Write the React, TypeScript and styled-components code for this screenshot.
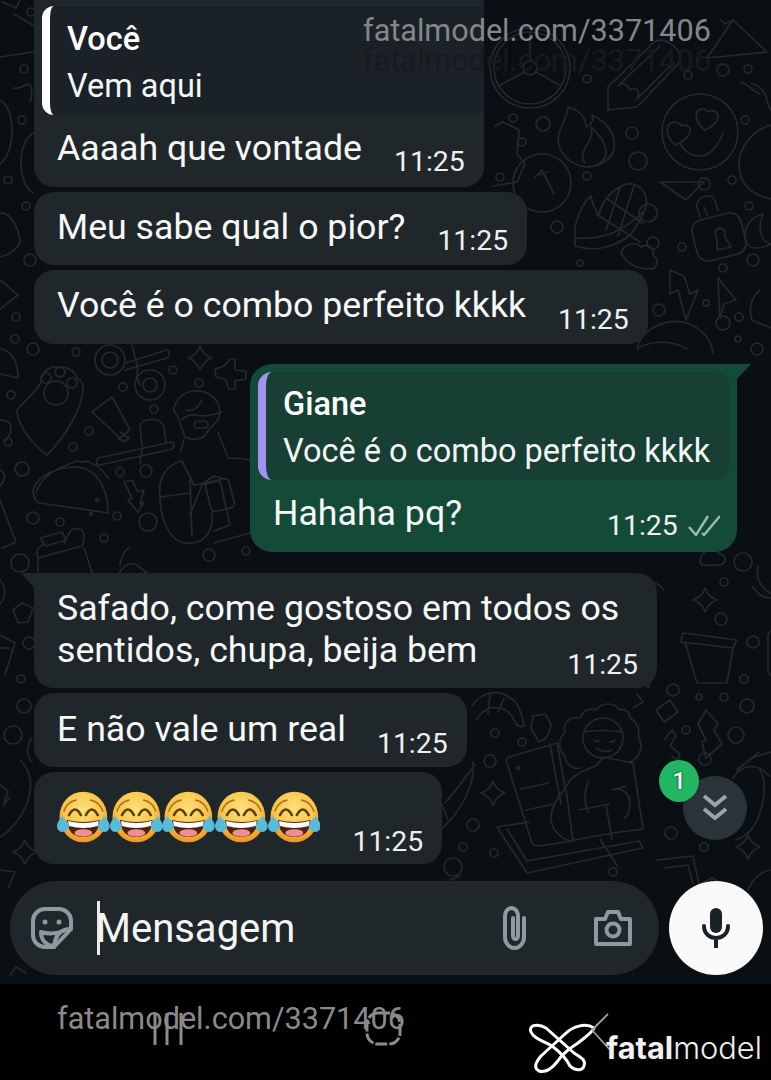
import React from "react";
import styled, { createGlobalStyle } from "styled-components";

const GlobalStyle = createGlobalStyle`
    html, body {
        margin: 0;
        padding: 0;
        background: #000;
    }
    * {
        box-sizing: border-box;
    }
`;

const Screen = styled.div`
    position: relative;
    width: 771px;
    height: 1080px;
    overflow: hidden;
    font-family: Roboto, "Liberation Sans", sans-serif;
    color: #fff;
    background: #000;
`;

const ChatArea = styled.main`
    position: relative;
    height: 984px;
    background: #0a0f13;
    display: flex;
    flex-direction: column;
`;

const Wallpaper = styled.svg`
    position: absolute;
    inset: 0;
    fill: none;
    stroke: #23292d;
    stroke-width: 1.7;
    stroke-linecap: round;
    stroke-linejoin: round;
`;

const Messages = styled.div`
    position: relative;
    flex: 1;
    display: flex;
    flex-direction: column;
    align-items: flex-start;
    padding: 0 34px;
`;

const Bubble = styled.div<{ $gap?: number; $tail?: boolean; $openTop?: boolean }>`
    position: relative;
    margin-top: ${props => props.$gap ?? 5}px;
    padding: ${props => (props.$openTop ? "6px" : "0")} 19px 0 23px;
    background: #1f272b;
    border-radius: ${props => (props.$openTop ? "0 0 20px 20px" : "20px")};
    ${props => props.$tail && "border-top-left-radius: 0;"}

    ${props => props.$tail && `
        &::before {
            content: "";
            position: absolute;
            top: 0;
            left: -13px;
            width: 14px;
            height: 16px;
            background: #1f272b;
            clip-path: polygon(0 0, 100% 0, 100% 100%);
        }
    `}
`;

const SentBubble = styled.div`
    position: relative;
    align-self: flex-end;
    width: 487px;
    height: 188px;
    margin-top: 20px;
    padding: 8px 8px 0;
    background: #144b38;
    border-radius: 22px 0 22px 22px;

    &::after {
        content: "";
        position: absolute;
        top: 0;
        right: -14px;
        width: 15px;
        height: 16px;
        background: #144b38;
        clip-path: polygon(0 0, 100% 0, 0 100%);
    }
`;

const Quote = styled.div<{ $bar: string; $bg: string }>`
    overflow: hidden;
    background: ${props => props.$bg};
    border-radius: 14px;
    border-left: 8px solid ${props => props.$bar};
`;

const ReceivedQuote = styled(Quote)`
    width: 442px;
    height: 109px;
    margin: 0 -19px 0 -15px;
    padding: 14px 0 0 17px;
    border-radius: 12px 0 14px 12px;
`;

const SentQuote = styled(Quote)`
    height: 108px;
    padding: 13px 0 0 17px;
`;

const QuoteAuthor = styled.div`
    font-size: 32.5px;
    line-height: 38px;
    font-weight: 500;
    color: #fff;
    margin-bottom: 9px;
`;

const QuoteText = styled.div`
    font-size: 32.5px;
    line-height: 38px;
    white-space: nowrap;
    color: #f4f5f5;
`;

const Row = styled.div<{ $height: number }>`
    display: flex;
    align-items: flex-start;
    height: ${props => props.$height}px;
`;

const MessageText = styled.div<{ $top?: number; $width?: number }>`
    flex: none;
    width: ${props => (props.$width ? `${props.$width}px` : "auto")};
    padding-top: ${props => props.$top ?? 14}px;
    font-size: 35.7px;
    line-height: 42px;
    white-space: nowrap;
    color: #f7f8f8;
`;

const Time = styled.span<{ $offset: number; $top: number }>`
    flex: none;
    margin-left: ${props => props.$offset}px;
    margin-top: ${props => props.$top}px;
    font-size: 28.4px;
    line-height: 34px;
    color: #eef0f0;
`;

const SentFooter = styled.div`
    display: flex;
    align-items: flex-start;
    padding-left: 15px;
`;

const Ticks = styled.svg`
    flex: none;
    margin: 35px 0 0 10px;
    fill: none;
    stroke: #9dbcb0;
    stroke-width: 2.4;
`;

const EmojiRow = styled.div`
    flex: none;
    display: flex;
    padding-top: 19px;
`;

const ScrollButton = styled.div`
    position: absolute;
    left: 683px;
    top: 776px;
    width: 64px;
    height: 64px;
    border-radius: 50%;
    background: #2a3338;
    display: flex;
    align-items: center;
    justify-content: center;
`;

const UnreadBadge = styled.span`
    position: absolute;
    left: -24px;
    top: -16px;
    width: 40px;
    height: 42px;
    border-radius: 50%;
    background: #22b562;
    color: #fff;
    font-size: 24px;
    font-weight: 500;
    display: flex;
    align-items: center;
    justify-content: center;
    text-shadow: 0 0 2px #000;
`;

const Composer = styled.div`
    position: relative;
    display: flex;
    align-items: center;
    gap: 10px;
    padding: 0 8px 9px 10px;
`;

const InputBar = styled.div`
    flex: 1;
    height: 94px;
    background: #1f272b;
    border-radius: 47px;
    display: flex;
    align-items: center;
    padding: 0 26px 0 21px;
`;

const Placeholder = styled.div`
    flex: 1;
    height: 54px;
    margin-left: 24px;
    border-left: 3px solid #e8eaea;
    font-size: 40px;
    line-height: 56px;
    text-indent: -4px;
    color: #f4f5f5;
`;

const BarIcon = styled.svg`
    flex: none;
    fill: none;
    stroke: #8f9a9e;
    stroke-width: 4;
    stroke-linecap: round;
    stroke-linejoin: round;
`;

const AttachIcon = styled(BarIcon)`
    margin-right: 63px;
`;

const MicButton = styled.div`
    flex: none;
    width: 94px;
    height: 94px;
    border-radius: 50%;
    background: #fafafa;
    display: flex;
    align-items: center;
    justify-content: center;
`;

const NavBar = styled.nav`
    position: relative;
    height: 96px;
    background: #000;
`;

const Watermark = styled.span<{ $top: number; $left: number; $color: string }>`
    position: absolute;
    top: ${props => props.$top}px;
    left: ${props => props.$left}px;
    font-size: 30.6px;
    line-height: 30px;
    white-space: nowrap;
    color: ${props => props.$color};
`;

const NavIcons = styled.svg`
    position: absolute;
    left: 0;
    top: 0;
    fill: none;
    stroke: #8c8c8c;
    stroke-width: 3;
`;

const BrandMark = styled.svg`
    position: absolute;
    left: 528px;
    top: 28px;
    fill: none;
    stroke: #fff;
    stroke-width: 3;
    stroke-linejoin: round;
`;

const BrandName = styled.span`
    position: absolute;
    left: 606px;
    top: 46px;
    font-family: Inter, "Noto Sans", sans-serif;
    font-size: 30.8px;
    line-height: 36px;
    font-weight: 300;
    color: #f1f1f1;

    b {
        font-weight: 700;
    }
`;

const dots: [number, number, number][] = [
    [31, 12, 4], [24, 69, 4], [22, 120, 4], [8, 180, 4], [26, 206, 4], [30, 260, 6], [16, 317, 4], [15, 339, 4],
    [723, 70, 6], [748, 69, 4], [587, 79, 4], [688, 75, 4], [513, 118, 4], [543, 124, 7], [522, 142, 4], [632, 133, 6],
    [638, 161, 9], [500, 177, 4], [587, 176, 4], [648, 213, 9], [653, 243, 6], [557, 227, 6], [704, 184, 6], [732, 180, 4],
    [749, 206, 4], [682, 247, 4], [723, 268, 4], [753, 260, 6], [706, 303, 3], [659, 310, 6], [739, 317, 4], [723, 323, 7],
    [738, 339, 3], [757, 349, 6], [745, 120, 4], [580, 263, 3],
    [33, 349, 6], [76, 352, 4], [173, 370, 4], [199, 383, 4], [123, 387, 4], [11, 395, 4], [154, 409, 4], [89, 431, 4],
    [8, 442, 4], [73, 447, 4], [22, 469, 7], [146, 471, 6], [120, 472, 4], [117, 516, 4], [33, 518, 6], [60, 522, 4],
    [148, 522, 9], [104, 538, 4], [20, 563, 9], [209, 555, 6], [246, 551, 4],
    [721, 619, 6], [753, 642, 6], [744, 679, 4], [673, 690, 6], [699, 697, 3], [724, 697, 4], [747, 706, 7], [724, 582, 4],
    [743, 562, 9], [686, 730, 4], [736, 735, 8], [522, 742, 4], [495, 733, 4], [490, 761, 6], [705, 759, 6], [473, 825, 6],
    [671, 833, 6], [463, 847, 4], [494, 853, 4], [704, 847, 4], [453, 867, 9], [613, 872, 4],
    [29, 643, 6], [21, 679, 4], [24, 706, 7], [13, 735, 9],
];

const sparkles: [number, number, number][] = [
    [200, 358, 12], [705, 600, 12], [493, 793, 12], [748, 847, 12], [25, 852, 12],
];

const sparklePath = (x: number, y: number, r: number) => {
    const c = r * 0.25;
    return `M${x} ${y - r}Q${x + c} ${y - c} ${x + r} ${y}Q${x + c} ${y + c} ${x} ${y + r}Q${x - c} ${y + c} ${x - r} ${y}Q${x - c} ${y - c} ${x} ${y - r}z`;
};

const Doodles = () => (
    <Wallpaper width="771" height="984" viewBox="0 0 771 984">
        {dots.map(([x, y, r]) => (
            <circle key={`${x}-${y}`} cx={x} cy={y} r={r} />
        ))}
        {sparkles.map(([x, y, r]) => (
            <path key={`${x}-${y}`} d={sparklePath(x, y, r)} />
        ))}

        {/* top right */}
        <circle cx="530" cy="68" r="40" />
        <circle cx="530" cy="68" r="36" />
        <circle cx="530" cy="68" r="7" />
        <path d="M530 32v29M499 86l25-14M561 86l-25-14" />
        <path d="M608 110l0-23 45-44c8-6 16-2 24 6 4 6 4 12 0 16l-40 42zM618 86c4-4 10-2 12 4 6-4 10 0 8 8M620 84l40-38M636 100l38-38" />
        <path d="M707 58l26-38 34 32zM733 20l-8 4-4-4M707 58l60-6" />
        <path d="M752 84c6 0 10 4 14 12 2 6 2 12 5 14M740 82c8 2 14 10 20 12" />
        <circle cx="700" cy="132" r="38" />
        <path d="M668 126c4-6 12-4 13 0 4-2 10 0 9 6-2 6-8 10-14 13-5-3-11-11-8-19zM697 112c4-5 10-3 11 0 4-3 10-1 10 5-1 6-6 10-13 13-6-4-11-12-8-18zM680 143c6 14 30 24 43-10" />
        <path d="M568 107c10 2 18 10 18 20 6-2 8-8 6-12 16 8 24 20 22 34-2 10-14 18-28 18-16-2-28-14-28-28 0-10 10-22 10-32z" />
        <path d="M585 163c-6-8 0-14 2-18 4-6 6-12 4-18 8 8 18 18 14 30-2 4-4 6-8 8" />
        <circle cx="542" cy="183" r="29" />
        <path d="M548 172l-10 3M534 178l8-8 12 24" />
        <path d="M575 238c-2-16 8-36 16-42 2 10 4 14 8 18 4-16 20-32 34-30 12 4 16 14 12 26-2 4-6 14-14 24-16 14-38 18-56 12zM596 214l44 28M606 198l38 26M620 188l-14 42M634 186l-16 50M575 238c20 2 44-2 68-26" />
        <path d="M660 182l44 0-18 18z" />
        <rect x="694" y="216" width="50" height="42" rx="11" transform="rotate(-14 719 237)" />
        <path d="M700 217l-3-10c-2-10 14-16 18-6l3 9M707 215l-3-8M717 229c4-2 8 0 8 4l0 4 6 10-14 3 0-12c-2-3-2-7 0-9z" />
        <path d="M621 253c3-10 16-12 20-6 6-4 14 0 12 8 6 4 6 14-4 14-8 0-20-2-28-16z" />
        <path d="M670 270l14 6 6 18 8-4-12 30-8-30-8 4z" />
        <path d="M718 278l18 22-12 4-4 14z" />
        <path d="M637 349c4-20 30-32 50-26 16 6 24 16 26 30M637 349c12-8 34-10 50 0M760 290c-8 6-12 18-8 30l19 8" />
        <path d="M495 126l8-4 16 8-2 24 8 10-8 18-24 4" />
        <path d="M763 214c-14 4-22 16-16 30 4 4 12 6 24 0-10-2-14-16-8-30zM771 125c-16 4-32 20-32 40 0 18 12 30 32 34" />

        {/* top left */}
        <path d="M0 57l33-5M20 0l-4 8-14-6M14 14l20 12" />
        <path d="M14 88c4 2 8-2 14-4 6 4 4 12 2 18M0 100c16 8 16 52 0 64" />
        <path d="M33 133c-16 10-16 50 0 60M0 213c12-2 20 20 20 30-4 8-12 12-20 14M0 280l18 15-18 14" />

        {/* middle left */}
        <path d="M47 455c-14-10-30-30-30-45 6-8 20-18 24-28 0-10 10-18 18-14 6-4 16 4 18 10 4 2 6 6 6 9 0 18-14 46-36 68zM0 348c14 4 18 16 18 30l-18-4" />
        <circle cx="56" cy="393" r="12" />
        <circle cx="46" cy="378" r="5" />
        <circle cx="60" cy="372" r="5" />
        <circle cx="72" cy="383" r="5" />
        <circle cx="110" cy="360" r="15" />
        <circle cx="110" cy="360" r="8" />
        <circle cx="150" cy="385" r="15" />
        <circle cx="150" cy="385" r="7" />
        <path d="M125 363l42-13c3 0 3 6 0 8l-42 12M132 345l6 24c-2 6 0 12 2 16" />
        <path d="M230 359l5 0v11l11 1v8l-11 2 0 8-6 0-4-10-9-2-1-8 9-3z" />
        <path d="M92 412l20-15 18 33-10 8zM120 432l9 6-4 4-7-4" />
        <path d="M98 458l74-16c3 1 2 6 0 7l-72 16c-4 0-5-4-2-7zM142 446l-2-20c2-6 6-6 8-6 6-2 14 0 16 8l2 14M142 450l-2 14" />
        <path d="M175 405c6-16 26-18 38-8 10 10 8 22 0 28l-8 10c-2 4-14 6-20 2l-8-22c-4-4-4-6-2-10zM182 420c4-6 12-6 20-4 6 0 14-2 20-4M186 410c6 2 12-2 16-10M180 452l4-12M218 432l10 26c6 0 12 0 22 2" />
        <rect x="194" y="421" width="14" height="7" rx="3.500" />
        <path d="M160 497c-2-16 4-32 22-36M182 461l12 24 26-4 10 44-16 6M190 480l2 56M160 497l30-4M160 497c0 20 8 44 26 46 18 2 28-12 26-30M190 515l12-30 8-2M214 543l36-10M228 480l-14-4-12 8" />
        <rect x="208" y="480" width="24" height="30" rx="4" transform="rotate(-14 220 495)" />
        <path d="M40 503c-6-2-8-10-6-16 6-12 22-20 44-20 18 2 30 20 30 46zM40 503l68 10M36 492c6-14 14-20 24-24l14-6c4-2 6 0 10 0 4-2 6 0 8 2 6 0 12 8 16 14" />
        <path d="M124 482l8-2 6 12 6-2-4 14 4-2-6 10-10-12 4-2z" />
        <circle cx="91" cy="514" r="1.500" />
        <circle cx="97" cy="500" r="1.500" />
        <path d="M40 538l22-6 4 8-20 6zM38 558l44-12c2-2 2-8 2-12-2-6-10-8-14-2-2 4-4 6-6 12M38 558c-2-6-2-10 6-14M84 548l10 30M38 558l0 26" />
        <path d="M118 576c4-10 12-16 20-10l44 34-24 6M130 548c-6 0-10 14-10 18" />
        <path d="M0 420c14 0 14 12 4 22M0 470c8 4 4 12 0 16M0 500l16 42-14 6" />

        {/* lower right */}
        <path d="M683 633l54 7-4 8-52-6zM685 642l12 41 30 0 6-35" />
        <path d="M703 554c4-6 14-4 16 0 6 0 8 6 4 10-6 2-18 2-22 0-2-4 0-8 2-10zM758 566c-2 12 0 18 13 28M752 586c6 8 10 12 19 12" />
        <path d="M664 590c-8-10-18-10-22-8l-10 10 14 4 8 12-8 8" />
        <path d="M651 672l-14 8 12 8zM637 694l6 8-10 6" />
        <rect x="768" y="630" width="20" height="46" rx="6" />
        <path d="M472 706c10-16 28-16 38-8 10 4 12 20 14 28-6 2-8-2-10-6-4-10-14-14-24-12-6 2-10 6-14 12M490 694l-2 20M504 698l-6 14" />
        <path d="M545 714l-12 2-2 12 8 14c8-2 12-12 12-18z" />
        <path d="M656 710l14-10 8 12-14 10zM706 710l12 14-4 6 8 14-16 14-4-16 4-2-8-16z" />
        <path d="M578 718c-8-2-16 6-13 14-6 6-8 18 0 24 0 8 8 14 16 12M630 718c8 4 10 14 8 18 6 10 2 22-8 26M580 718c4-8 10-10 16-8 6-8 18-8 24 0 4-2 10 2 10 8" />
        <circle cx="603" cy="738" r="20" />
        <path d="M585 732c8-2 26-2 36 0M594 740c2 2 4 2 6 0M610 742c2 0 4 0 5-2M596 748c6 4 12 4 16 2" />
        <path d="M507 763c-2-2 0-6 2-6l48-14 10 54 6 44-34 5c-6 0-8-2-8-6zM550 744l11 60M521 789l28-6M526 810l28-6" />
        <circle cx="518" cy="768" r="1.500" />
        <path d="M597 765l-18 8-8 6-16 24c-8 16-4 30 14 38l44-8 30-4-10-66-30-6zM579 810l30-6M606 805l6 34M612 790c10-4 18 4 18 14 0 8-4 14-6 14M588 812c-4-10-4-20 0-30M612 790l14-4" />
        <path d="M497 827l32-5M497 827l30 46 116-25-4-7-112 20-20-32M600 839l18 28" />
        <path d="M733 778c10-16 26-14 36-2M737 770l22-18M752 758l19-6M760 770c6 10 6 28-2 48-4 10-10 18-22 22" />
        <path d="M664 740l8-10 4 6-6 10 10 8-4 10M680 760c-4 0-6-2-8-4" />
        <path d="M475 765c-8 10-18 24-30 38M473 762c2 20-8 44-30 66M440 800l8 20" />
        <path d="M657 860l36-4 6 28M664 868l24-3 5 19M770 870c-10 2-18 10-22 20M700 884l12-6 12 6M450 880l10-4" />

        {/* lower left */}
        <path d="M13 610l9-7 11 5-5 14-10 1zM0 635l15 8-10 32M0 648l10 0" />
        <path d="M0 580c6 6 6 18 0 24M20 760c8 8 12 18 10 30-2 16-8 24-12 30-6 8-12 14-18 17M32 738c-6 8-6 18 0 24M0 785l8 6-4 12M3 806l6-8" />
        <path d="M0 870l15 2-7 16M10 975l6-8 10 6" />
    </Wallpaper>
);

const CryingLaugh = () => (
    <svg width="52.700" height="52" viewBox="0 0 53 52">
        <defs>
            <radialGradient id="faceGradient" cx="0.5" cy="0.35" r="0.65">
                <stop offset="0" stopColor="#fbe17c" />
                <stop offset="0.6" stopColor="#f9c74c" />
                <stop offset="1" stopColor="#ee9420" />
            </radialGradient>
        </defs>
        <ellipse cx="26.500" cy="26" rx="24" ry="25.500" fill="url(#faceGradient)" />
        <path d="M7 20Q10 11 19 9M46 20Q43 11 34 9" fill="none" stroke="#b46d1c" strokeWidth="1.600" strokeLinecap="round" />
        <path d="M12 24Q18 13 24 24M29 24Q35 13 41 24" fill="none" stroke="#5e3d14" strokeWidth="2.600" strokeLinecap="round" />
        <path d="M10 29Q26.500 33 43 29Q42 46 26.500 46Q11 46 10 29Z" fill="#4a2312" />
        <path d="M11 30Q26.500 34 42 30L41 35Q26.500 39 12 35Z" fill="#fff" />
        <ellipse cx="26.500" cy="42" rx="9" ry="3.800" fill="#ef8f8f" />
        <path d="M5 25C8 29 12 32 12 35C12 39 8 41 5 41C2 41 0 38 0 35C0 32 3 28 5 25Z" fill="#58bcd9" />
        <path d="M48 25C45 29 41 32 41 35C41 39 45 41 48 41C51 41 53 38 53 35C53 32 50 28 48 25Z" fill="#58bcd9" />
    </svg>
);

const App = () => {
    return (
        <Screen>
            <GlobalStyle />
            <ChatArea>
                <Doodles />

                <Messages>
                    <Bubble $gap={0} $openTop>
                        <ReceivedQuote $bar="#ffffff" $bg="#1a2227">
                            <QuoteAuthor>Você</QuoteAuthor>
                            <QuoteText>Vem aqui</QuoteText>
                        </ReceivedQuote>
                        <Row $height={72}>
                            <MessageText $top={12}>Aaaah que vontade</MessageText>
                            <Time $offset={32} $top={30}>11:25</Time>
                        </Row>
                    </Bubble>
                    <Bubble>
                        <Row $height={73}>
                            <MessageText>Meu sabe qual o pior?</MessageText>
                            <Time $offset={32} $top={32}>11:25</Time>
                        </Row>
                    </Bubble>
                    <Bubble>
                        <Row $height={74}>
                            <MessageText>Você é o combo perfeito kkkk</MessageText>
                            <Time $offset={32} $top={33}>11:25</Time>
                        </Row>
                    </Bubble>

                    <SentBubble>
                        <SentQuote $bar="#a292f2" $bg="#173f34">
                            <QuoteAuthor>Giane</QuoteAuthor>
                            <QuoteText>Você é o combo perfeito kkkk</QuoteText>
                        </SentQuote>
                        <SentFooter>
                            <MessageText $top={12} $width={334}>Hahaha pq?</MessageText>
                            <Time $offset={0} $top={29}>11:25</Time>
                            <Ticks width="32" height="21" viewBox="0 0 32 21">
                                <path d="M1 12l7 8L20 1M14 18l2 2L32 1" />
                            </Ticks>
                        </SentFooter>
                    </SentBubble>

                    <Bubble $gap={21} $tail>
                        <Row $height={115}>
                            <MessageText>
                                Safado, come gostoso em todos os<br />sentidos, chupa, beija bem
                            </MessageText>
                            <Time $offset={-52} $top={75}>11:25</Time>
                        </Row>
                    </Bubble>
                    <Bubble>
                        <Row $height={74}>
                            <MessageText $top={15}>E não vale um real</MessageText>
                            <Time $offset={31} $top={34}>11:25</Time>
                        </Row>
                    </Bubble>
                    <Bubble>
                        <Row $height={92}>
                            <EmojiRow>
                                <CryingLaugh />
                                <CryingLaugh />
                                <CryingLaugh />
                                <CryingLaugh />
                                <CryingLaugh />
                            </EmojiRow>
                            <Time $offset={32} $top={53}>11:25</Time>
                        </Row>
                    </Bubble>
                </Messages>

                <ScrollButton>
                    <UnreadBadge>1</UnreadBadge>
                    <svg width="26" height="28" viewBox="0 0 26 28" fill="none" stroke="#9aa5a9" strokeWidth="4">
                        <path d="M2 2l11 9 11-9M2 15l11 9 11-9" />
                    </svg>
                </ScrollButton>

                <Composer>
                    <InputBar>
                        <BarIcon width="42" height="42" viewBox="0 0 42 42">
                            <path d="M14 2H28A12 12 0 0 1 40 14V22L23 40H14A12 12 0 0 1 2 28V14A12 12 0 0 1 14 2Z" />
                            <path d="M10 25C16 27 26 27 32 24M40 22C30 22 24 28 23 40M10 25C10 33 15 38 22 39" />
                            <circle cx="14" cy="15" r="2.500" fill="#8f9a9e" stroke="none" />
                            <circle cx="28" cy="15" r="2.500" fill="#8f9a9e" stroke="none" />
                        </BarIcon>
                        <Placeholder>Mensagem</Placeholder>
                        <AttachIcon width="30" height="44" viewBox="0 0 30 44">
                            <path d="M24 12V31A9.500 11 0 0 1 5 31V10A6.500 8 0 0 1 18 10V30A2.500 3 0 0 1 13 30V12" />
                        </AttachIcon>
                        <BarIcon width="40" height="38" viewBox="0 0 40 38">
                            <path d="M3 10h9l3-7h10l3 7h9v25H3z" />
                            <circle cx="20" cy="21" r="6.500" />
                        </BarIcon>
                    </InputBar>
                    <MicButton>
                        <svg width="30" height="40" viewBox="0 0 30 40" fill="none" stroke="#1b2226" strokeWidth="4" strokeLinecap="round">
                            <rect x="9" y="0" width="12" height="25" rx="6" fill="#1b2226" stroke="none" />
                            <path d="M3 18c0 16 24 16 24 0M15 30v9" />
                        </svg>
                    </MicButton>
                </Composer>
            </ChatArea>

            <NavBar>
                <NavIcons width="771" height="96" viewBox="0 0 771 96">
                    <path d="M155 29v32M167 29v32M181 29v32" />
                    <rect x="367" y="29" width="33" height="31" rx="11" strokeDasharray="12 2" />
                </NavIcons>
                <Watermark $top={20} $left={57} $color="#8a8a8a">fatalmodel.com/3371406</Watermark>
                <BrandMark width="84" height="62" viewBox="528 1012 84 62">
                    <path d="M531 1032C528 1025 538 1023 546 1028L574 1053C582 1058 586 1060 584 1066C582 1072 574 1070 570 1066C566 1058 560 1052 552 1046C544 1041 534 1039 531 1032Z" />
                    <path d="M594 1028C585 1022 572 1027 565 1034L541 1056C536 1062 533 1068 539 1071C546 1073 553 1067 557 1062C562 1054 570 1048 578 1043C585 1037 592 1033 594 1028Z" />
                    <path d="M592 1030L608 1014M592 1030L610 1050" strokeWidth="1.800" stroke="#a0a0a0" />
                </BrandMark>
                <BrandName><b>fatal</b>model</BrandName>
            </NavBar>

            <Watermark $top={16} $left={363} $color="#83878a">fatalmodel.com/3371406</Watermark>
            <Watermark $top={46} $left={363} $color="#171b1e">fatalmodel.com/3371406</Watermark>
        </Screen>
    );
};

export default App;
